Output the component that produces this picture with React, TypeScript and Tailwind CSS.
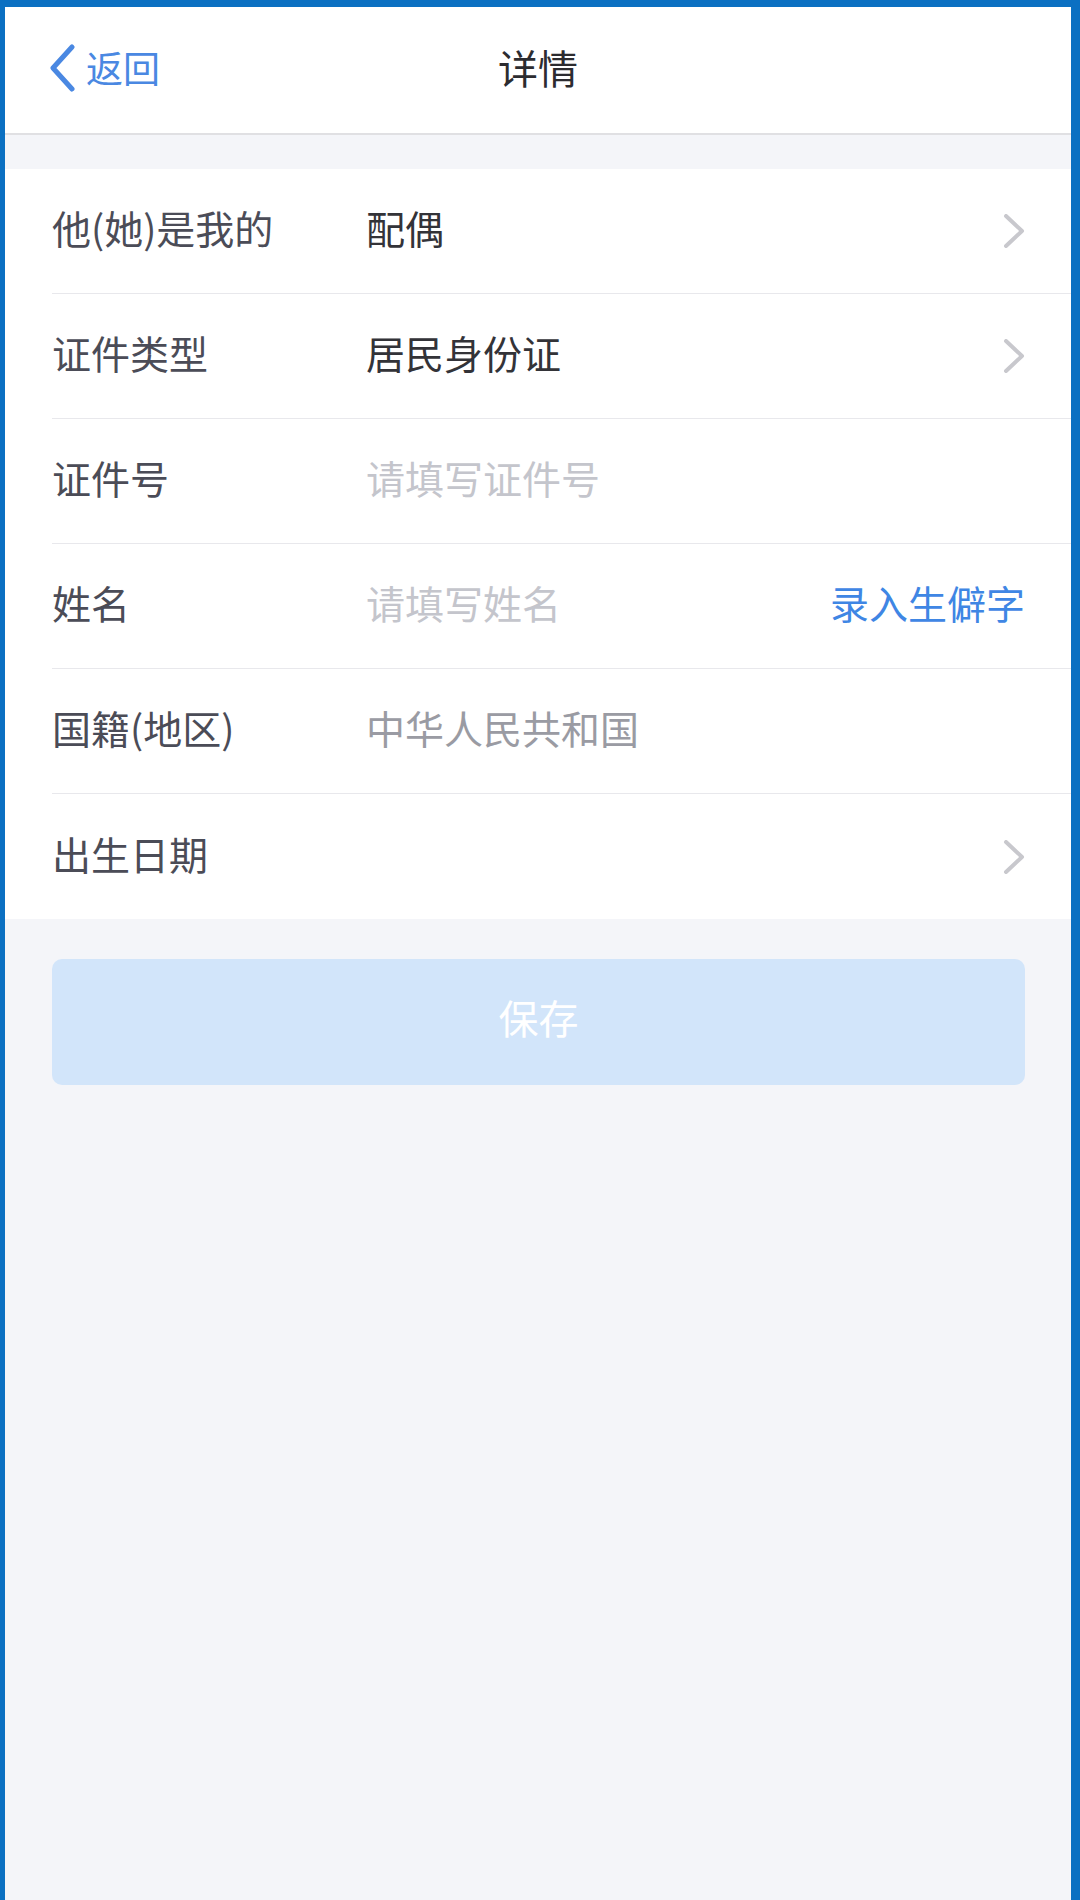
import { ReactNode } from "react";

const font = { fontFamily: '"Noto Sans CJK SC", "Noto Sans", sans-serif' };

function Chevron() {
  return (
    <svg width="22" height="34" viewBox="0 0 22 34" fill="none" className="shrink-0">
      <polyline points="3,2 19,17 3,32" stroke="#c8c8cd" strokeWidth="4" strokeLinecap="round" strokeLinejoin="round" />
    </svg>
  );
}

interface RowProps {
  label: string;
  value?: string;
  tone?: "value" | "placeholder" | "muted";
  arrow?: boolean;
  action?: ReactNode;
  last?: boolean;
}

function Row({ label, value, tone = "value", arrow, action, last }: RowProps) {
  const toneClass =
    tone === "value" ? "text-[#333338]" : tone === "placeholder" ? "text-[#c4c5cc]" : "text-[#9a9ba3]";

  return (
    <div className={`flex items-center h-[125px] pr-[46px] ${last ? "" : "border-b border-[#e8e8ec]"}`}>
      <div className="w-[314px] shrink-0 pb-[7px] text-[39px] text-[#4b4c57]">{label}</div>
      <div className={`flex-1 pb-[7px] text-[39px] ${toneClass}`}>{value}</div>
      {action}
      {arrow && <Chevron />}
    </div>
  );
}

export default function App() {
  return (
    <div style={font} className="min-h-[1900px] bg-[#f4f5f9] border-l-[5px] border-r-[9px] border-t-[7px] border-[#0b70c2] flex flex-col">
      {/* header */}
      <div className="h-[128px] bg-white border-b-2 border-[#e0e0e3] flex items-center relative">
        <div className="flex items-center pl-[43px] gap-[10px] pb-[4px] text-[#4a88e2]">
          <svg width="28" height="48" viewBox="0 0 28 48" fill="none">
            <polyline points="24,3 5,24 24,45" stroke="#4a88e2" strokeWidth="5" strokeLinecap="round" strokeLinejoin="round" />
          </svg>
          <span className="text-[37px]">返回</span>
        </div>
        <div className="absolute left-0 right-0 pb-[6px] text-center text-[40px] text-[#2c2c30] pointer-events-none">详情</div>
      </div>

      {/* form */}
      <div className="mt-[34px] bg-white pl-[47px]">
        <Row label="他(她)是我的" value="配偶" arrow />
        <Row label="证件类型" value="居民身份证" arrow />
        <Row label="证件号" value="请填写证件号" tone="placeholder" />
        <Row
          label="姓名"
          value="请填写姓名"
          tone="placeholder"
          action={<span className="pb-[7px] text-[39px] text-[#3f86e4]">录入生僻字</span>}
        />
        <Row label="国籍(地区)" value="中华人民共和国" tone="muted" />
        <Row label="出生日期" arrow last />
      </div>

      <div className="pr-[46px] pl-[47px] mt-[40px]">
        <button className="w-full h-[126px] pb-[10px] rounded-[10px] bg-[#d2e5fa] text-white text-[40px]">保存</button>
      </div>
    </div>
  );
}
